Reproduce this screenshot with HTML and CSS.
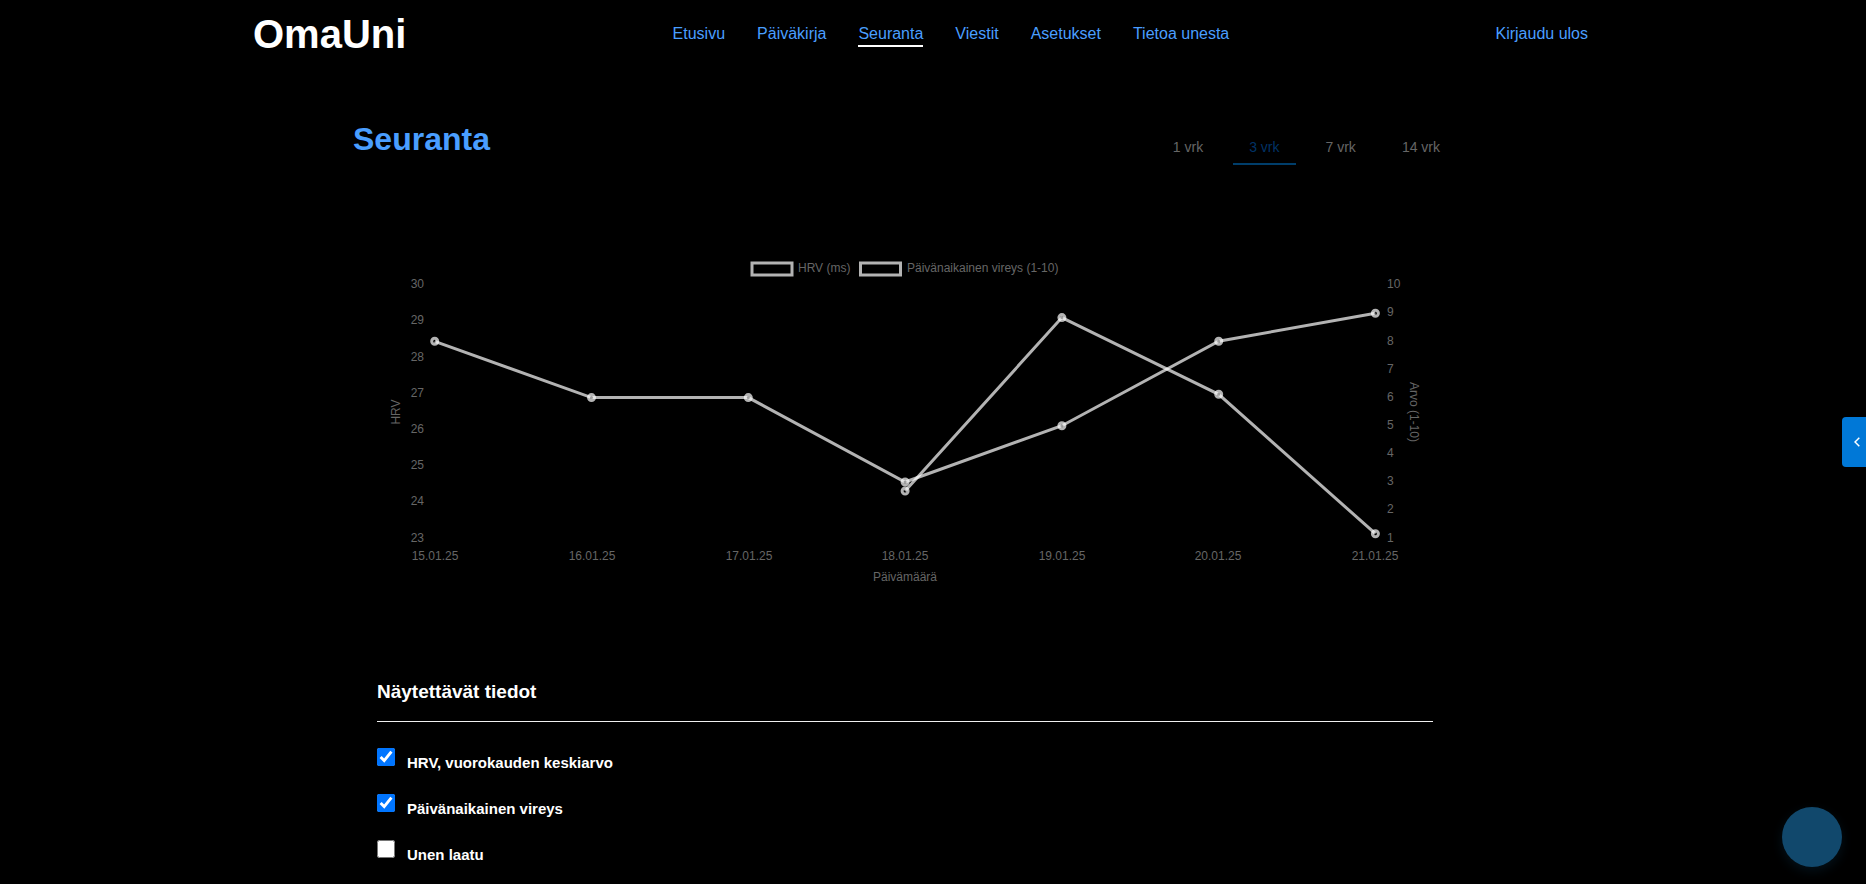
FILE: index.html
```
<!DOCTYPE html>
<html lang="fi">
<head>
<meta charset="utf-8">
<meta name="viewport" content="width=device-width, initial-scale=1">
<title>OmaUni – Seuranta</title>
<link rel="stylesheet" href="styles.css">
</head>
<body>
<header class="header">
  <a class="logo" href="#">OmaUni</a>
  <nav class="nav">
    <a href="#">Etusivu</a>
    <a href="#">Päiväkirja</a>
    <a class="active" href="#" aria-current="page">Seuranta</a>
    <a href="#">Viestit</a>
    <a href="#">Asetukset</a>
    <a href="#">Tietoa unesta</a>
  </nav>
  <nav class="nav"><a href="#">Kirjaudu ulos</a></nav>
</header>

<div class="page">
<main class="main">
  <div class="heading">
    <h1>Seuranta</h1>
    <div class="tabs">
      <button type="button">1 vrk</button>
      <button type="button" class="selected">3 vrk</button>
      <button type="button">7 vrk</button>
      <button type="button">14 vrk</button>
    </div>
  </div>

  <section class="content">
    <svg class="chart" viewBox="0 0 1056 340" role="img" aria-label="HRV ja päivänaikainen vireys">
      <g class="series">
        <rect x="375" y="11" width="40" height="12"/>
        <rect x="483.5" y="11" width="40" height="12"/>
      </g>
      <g class="label">
        <text x="421" y="20">HRV (ms)</text>
        <text x="530" y="20">Päivänaikainen vireys (1-10)</text>
      </g>
      <g class="label end">
        <text x="47" y="36">30</text>
        <text x="47" y="72">29</text>
        <text x="47" y="109">28</text>
        <text x="47" y="145">27</text>
        <text x="47" y="181">26</text>
        <text x="47" y="217">25</text>
        <text x="47" y="253">24</text>
        <text x="47" y="290">23</text>
      </g>
      <g class="label">
        <text x="1010" y="36">10</text>
        <text x="1010" y="64">9</text>
        <text x="1010" y="93">8</text>
        <text x="1010" y="121">7</text>
        <text x="1010" y="149">6</text>
        <text x="1010" y="177">5</text>
        <text x="1010" y="205">4</text>
        <text x="1010" y="233">3</text>
        <text x="1010" y="261">2</text>
        <text x="1010" y="290">1</text>
      </g>
      <g class="label middle">
        <text x="58" y="308">15.01.25</text>
        <text x="215" y="308">16.01.25</text>
        <text x="372" y="308">17.01.25</text>
        <text x="528" y="308">18.01.25</text>
        <text x="685" y="308">19.01.25</text>
        <text x="841" y="308">20.01.25</text>
        <text x="998" y="308">21.01.25</text>
        <text x="528" y="329">Päivämäärä</text>
        <text transform="translate(23 160) rotate(-90)">HRV</text>
        <text transform="translate(1033 160) rotate(90)">Arvo (1-10)</text>
      </g>
      <g class="series">
        <path d="M57.7 89.3 214.5 145.6H371.3L528.1 230 684.9 173.7 841.7 89.3 998.4 61.2"/>
        <path d="M528.1 239 684.9 65.6 841.7 142.3 998.4 281.7"/>
      </g>
      <g class="series points">
        <circle cx="57.7" cy="89.3" r="3"/>
        <circle cx="214.5" cy="145.6" r="3"/>
        <circle cx="371.3" cy="145.6" r="3"/>
        <circle cx="528.1" cy="230" r="3"/>
        <circle cx="684.9" cy="173.7" r="3"/>
        <circle cx="841.7" cy="89.3" r="3"/>
        <circle cx="998.4" cy="61.2" r="3"/>
        <circle cx="528.1" cy="239" r="3"/>
        <circle cx="684.9" cy="65.6" r="3"/>
        <circle cx="841.7" cy="142.3" r="3"/>
        <circle cx="998.4" cy="281.7" r="3"/>
      </g>
    </svg>

    <h2>Näytettävät tiedot</h2>
    <ul class="options">
      <li><input type="checkbox" id="hrv" checked><label for="hrv">HRV, vuorokauden keskiarvo</label></li>
      <li><input type="checkbox" id="vireys" checked><label for="vireys">Päivänaikainen vireys</label></li>
      <li><input type="checkbox" id="laatu"><label for="laatu">Unen laatu</label></li>
    </ul>
  </section>
</main>
</div>

<button type="button" class="drawer" aria-label="Avaa sivupaneeli">
  <svg width="6" height="10" viewBox="0 0 6 10"><path d="M5.3.7 1 5l4.3 4.3"/></svg>
</button>
<button type="button" class="fab" aria-label="Avaa chat"></button>
</body>
</html>
```

FILE: styles.css
```
* {
  box-sizing: border-box;
}

body {
  margin: 0;
  background: #000;
  color: #fff;
  font-family: "Liberation Sans", Arial, sans-serif;
  font-size: 16px;
}

button {
  font: inherit;
  border: 0;
  background: none;
  cursor: pointer;
}

.header {
  display: flex;
  justify-content: space-between;
  align-items: center;
  max-width: 1360px;
  margin: 0 auto;
  padding: 11px 25px 10px 0;
}

.logo {
  color: #fff;
  font-size: 40px;
  font-weight: bold;
  line-height: 46px;
  text-decoration: none;
}

.nav {
  display: flex;
  gap: 32px;
}

.nav a {
  padding: 2px 0;
  border: solid transparent;
  border-width: 2px 0;
  color: #4a9eff;
  line-height: 18px;
  text-decoration: none;
}

.nav a.active {
  border-bottom-color: #fff;
}

.page {
  max-width: 1360px;
  margin: 0 auto;
  padding: 54px 156px 20px 100px;
}

.heading {
  display: flex;
  justify-content: space-between;
  align-items: flex-start;
}

h1 {
  margin: 0;
  color: #4a9eff;
  font-size: 32px;
  line-height: 37px;
}

.tabs {
  display: flex;
  gap: 14px;
  margin: 10px 1px 0 0;
}

.tabs button {
  padding: 8px 16px;
  border-bottom: 2px solid transparent;
  color: #666;
  font-size: 14px;
  line-height: 16px;
}

.tabs .selected {
  border-bottom-color: #003e6b;
  color: #003366;
}

.content {
  padding: 87px 24px 0;
}

.chart {
  display: block;
  width: 100%;
}

.label {
  fill: #666;
  font-size: 12px;
}

.end {
  text-anchor: end;
}

.middle {
  text-anchor: middle;
}

.series {
  fill: none;
  stroke: rgba(255, 255, 255, 0.7);
  stroke-width: 3;
}

.points {
  fill: rgba(0, 0, 0, 0.1);
}

h2 {
  margin: 88px 0 26px;
  padding-bottom: 17px;
  border-bottom: 1px solid #f0f0f0;
  font-size: 19px;
  line-height: 24px;
}

.options {
  display: grid;
  gap: 23px;
  margin: 0;
  padding: 0;
  list-style: none;
}

.options li {
  display: flex;
  align-items: flex-start;
  gap: 12px;
}

.options input {
  width: 18px;
  height: 18px;
  margin: 0;
}

.options label {
  padding-top: 6px;
  font-size: 15px;
  font-weight: bold;
  line-height: 17px;
}

.drawer {
  position: fixed;
  top: 417px;
  right: 0;
  display: flex;
  align-items: center;
  justify-content: center;
  width: 24px;
  height: 50px;
  padding: 0 0 0 6px;
  border-radius: 4px 0 0 4px;
  background: #0078d7;
}

.drawer path {
  fill: none;
  stroke: #fff;
  stroke-width: 1.5;
}

.fab {
  position: fixed;
  right: 24px;
  bottom: 17px;
  width: 60px;
  height: 60px;
  border-radius: 50%;
  background: #11486c;
  box-shadow: 0 4px 12px rgba(17, 72, 108, 0.25);
}
```
